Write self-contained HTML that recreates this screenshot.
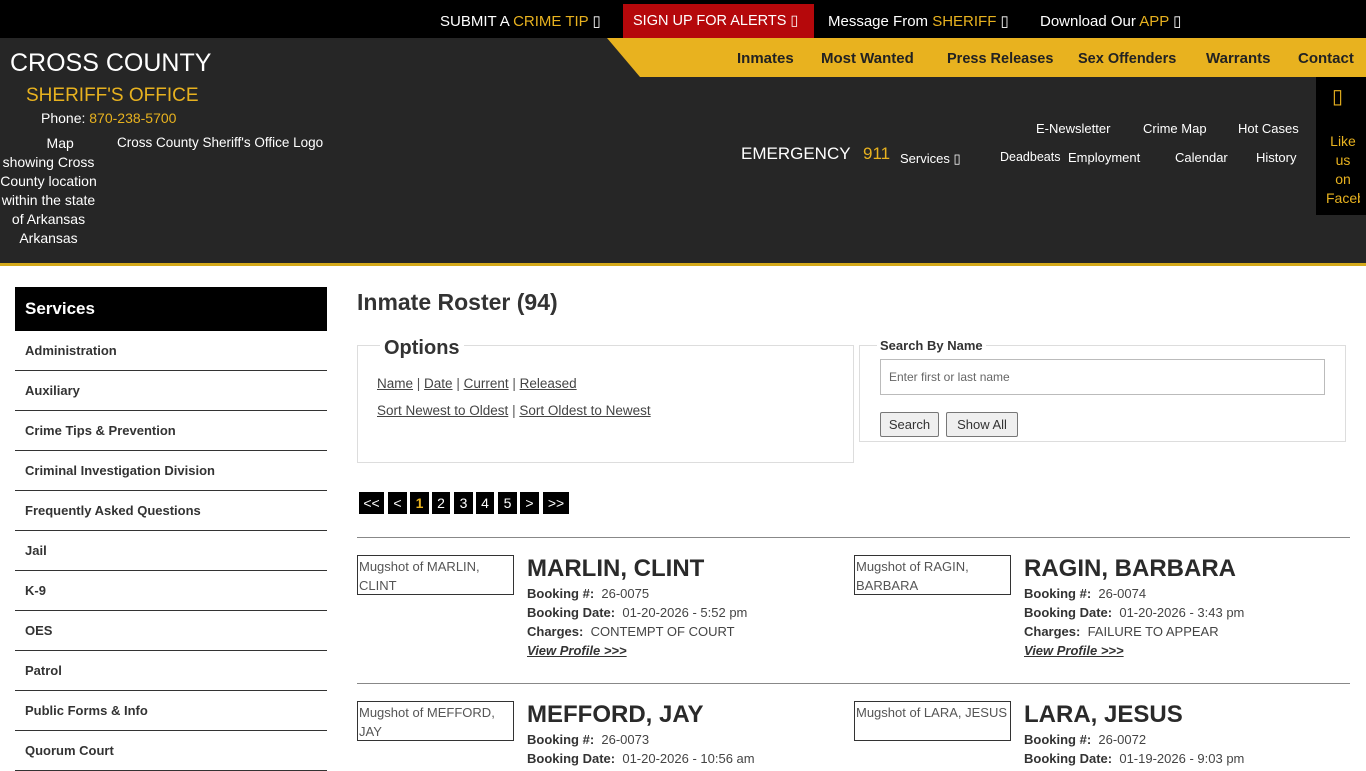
<!DOCTYPE html>
<html><head><meta charset="utf-8"><style>
*{box-sizing:border-box;margin:0;padding:0}
body{width:1366px;height:768px;overflow:hidden;font-family:"Liberation Sans",sans-serif;background:#fff;color:#333;position:relative}
.abs{position:absolute;white-space:nowrap}
.top{position:absolute;left:0;top:0;width:1366px;height:38px;background:#000}
.top .t{position:absolute;top:12px;font-size:15px;color:#fff}
.g,.top .g{color:#e8b21f}
.hdr{position:absolute;left:0;top:38px;width:1366px;height:228px;background:#262626;border-bottom:3px solid #d4a91a}
.nav{position:absolute;left:607px;top:38px;width:759px;height:39px;background:#e8b21f;clip-path:polygon(0 0,100% 0,100% 100%,33px 100%)}
.nav span{position:absolute;top:12px;font-size:15px;font-weight:bold;color:#222}
.w{color:#fff}
.sm{font-size:14px;color:#fff}
.side{position:absolute;left:15px;top:287px;width:312px}
.side .h{background:#000;color:#fff;font-weight:bold;font-size:17px;height:44px;line-height:44px;padding-left:10px}
.side .i{height:40px;line-height:40px;border-bottom:1px solid #333;padding-left:10px;font-size:13px;font-weight:bold;color:#333}
a{color:#444;text-decoration:underline}
.pg{position:absolute;top:492px;height:22px;background:#000;color:#fff;font-size:14px;text-align:center;line-height:22px}
.name{font-size:24px;font-weight:bold;color:#2a2a2a}
.f{font-size:13px;color:#444;line-height:19px}
.f b{color:#333}
.mug{position:absolute;width:157px;height:40px;border:1px solid #333;font-size:13px;color:#555;padding:1px;line-height:19px;white-space:normal}
</style></head><body>
<div class="top">
<span class="t" style="left:440px">SUBMIT A <span class="g">CRIME TIP</span> ▯</span>
<div style="position:absolute;left:623px;top:4px;width:191px;height:34px;background:#b5080b"></div>
<span class="t" style="left:633px;top:13px;font-size:14.5px">SIGN UP FOR ALERTS ▯</span>
<span class="t" style="left:828px">Message From <span class="g">SHERIFF</span> ▯</span>
<span class="t" style="left:1040px">Download Our <span class="g">APP</span> ▯</span>
</div>
<div class="hdr"></div>
<div class="nav">
<span style="left:130px">Inmates</span><span style="left:214px">Most Wanted</span><span style="left:340px;top:13px;font-size:14.5px">Press Releases</span><span style="left:471px;top:13px;font-size:14.5px">Sex Offenders</span><span style="left:599px">Warrants</span><span style="left:691px">Contact</span>
</div>
<div class="abs w" style="left:10px;top:49px;font-size:25px">CROSS COUNTY</div>
<div class="abs g" style="left:26px;top:85px;font-size:19px">SHERIFF'S OFFICE</div>
<div class="abs w" style="left:41px;top:110px;font-size:14px">Phone: <span class="g">870-238-5700</span></div>
<div class="abs sm" style="left:0;top:134px;width:97px;text-align:center;white-space:normal;line-height:19px">&nbsp;&nbsp;&nbsp;&nbsp;&nbsp;&nbsp;Map showing Cross County location within the state of Arkansas Arkansas</div>
<div class="abs sm" style="left:117px;top:135px;font-size:13.5px">Cross County Sheriff's Office Logo</div>
<div class="abs w" style="left:741px;top:144px;font-size:17px">EMERGENCY <span class="g" style="margin-left:8px">911</span></div>
<div class="abs sm" style="left:1036px;top:121px;font-size:13px">E-Newsletter</div>
<div class="abs sm" style="left:1143px;top:121px;font-size:13px">Crime Map</div>
<div class="abs sm" style="left:1238px;top:121px;font-size:13px">Hot Cases</div>
<div class="abs sm" style="left:900px;top:151px;font-size:13px">Services ▯</div>
<div class="abs sm" style="left:1000px;top:150px;font-size:12.5px">Deadbeats</div>
<div class="abs sm" style="left:1068px;top:150px;font-size:13px">Employment</div>
<div class="abs sm" style="left:1175px;top:150px;font-size:13px">Calendar</div>
<div class="abs sm" style="left:1256px;top:150px;font-size:13px">History</div>
<div style="position:absolute;left:1316px;top:77px;width:50px;height:138px;background:#000"></div>
<div class="abs g" style="left:1332px;top:84px;font-size:20px">▯</div>
<div class="abs g" style="left:1326px;top:132px;width:34px;font-size:14px;text-align:center;white-space:normal;line-height:19px;overflow:hidden;height:76px">Like us on Facebook</div>

<div class="side"><div class="h">Services</div>
<div class="i">Administration</div><div class="i">Auxiliary</div><div class="i">Crime Tips &amp; Prevention</div><div class="i">Criminal Investigation Division</div><div class="i">Frequently Asked Questions</div><div class="i">Jail</div><div class="i">K-9</div><div class="i">OES</div><div class="i">Patrol</div><div class="i">Public Forms &amp; Info</div><div class="i">Quorum Court</div></div>

<div class="abs" style="left:357px;top:289px;font-size:23px;font-weight:bold;color:#333">Inmate Roster (94)</div>
<div style="position:absolute;left:357px;top:345px;width:497px;height:118px;border:1px solid #ddd"></div>
<div class="abs" style="left:380px;top:337px;font-size:20px;font-weight:bold;background:#fff;padding:0 4px;color:#333">Options</div>
<div class="abs" style="left:377px;top:376px;font-size:13.5px;color:#555"><a>Name</a> | <a>Date</a> | <a>Current</a> | <a>Released</a></div>
<div class="abs" style="left:377px;top:403px;font-size:13.5px;color:#555"><a>Sort Newest to Oldest</a> | <a>Sort Oldest to Newest</a></div>
<div style="position:absolute;left:859px;top:345px;width:487px;height:97px;border:1px solid #ddd"></div>
<div class="abs" style="left:877px;top:338px;font-size:13px;font-weight:bold;background:#fff;padding:0 3px;color:#333">Search By Name</div>
<div style="position:absolute;left:880px;top:359px;width:445px;height:36px;border:1px solid #bbb;font-size:12px;color:#666;padding:10px 8px">Enter first or last name</div>
<div style="position:absolute;left:880px;top:412px;width:59px;height:25px;border:1px solid #777;background:#efefef;font-size:13px;text-align:center;line-height:23px;border-radius:2px">Search</div>
<div style="position:absolute;left:946px;top:412px;width:72px;height:25px;border:1px solid #777;background:#efefef;font-size:13px;text-align:center;line-height:23px;border-radius:2px">Show All</div>

<div class="pg" style="left:359px;width:25px">&lt;&lt;</div>
<div class="pg" style="left:388px;width:19px">&lt;</div>
<div class="pg" style="left:410px;width:19px;color:#e8b21f;font-weight:bold">1</div>
<div class="pg" style="left:432px;width:18px">2</div>
<div class="pg" style="left:454px;width:19px">3</div>
<div class="pg" style="left:476px;width:18px">4</div>
<div class="pg" style="left:498px;width:19px">5</div>
<div class="pg" style="left:520px;width:19px">&gt;</div>
<div class="pg" style="left:543px;width:26px">&gt;&gt;</div>

<div style="position:absolute;left:357px;top:537px;width:993px;border-top:1px solid #888"></div>
<div style="position:absolute;left:357px;top:683px;width:993px;border-top:1px solid #888"></div>

<div class="mug" style="left:357px;top:555px">Mugshot of MARLIN, CLINT</div>
<div class="abs name" style="left:527px;top:555px">MARLIN, CLINT</div>
<div class="abs f" style="left:527px;top:584px"><b>Booking #:</b>&nbsp; 26-0075<br><b>Booking Date:</b>&nbsp; 01-20-2026 - 5:52 pm<br><b>Charges:</b>&nbsp; CONTEMPT OF COURT<br><i><b><u>View Profile &gt;&gt;&gt;</u></b></i></div>

<div class="mug" style="left:854px;top:555px">Mugshot of RAGIN, BARBARA</div>
<div class="abs name" style="left:1024px;top:555px">RAGIN, BARBARA</div>
<div class="abs f" style="left:1024px;top:584px"><b>Booking #:</b>&nbsp; 26-0074<br><b>Booking Date:</b>&nbsp; 01-20-2026 - 3:43 pm<br><b>Charges:</b>&nbsp; FAILURE TO APPEAR<br><i><b><u>View Profile &gt;&gt;&gt;</u></b></i></div>

<div class="mug" style="left:357px;top:701px">Mugshot of MEFFORD, JAY</div>
<div class="abs name" style="left:527px;top:701px">MEFFORD, JAY</div>
<div class="abs f" style="left:527px;top:730px"><b>Booking #:</b>&nbsp; 26-0073<br><b>Booking Date:</b>&nbsp; 01-20-2026 - 10:56 am</div>

<div class="mug" style="left:854px;top:701px">Mugshot of LARA, JESUS</div>
<div class="abs name" style="left:1024px;top:701px">LARA, JESUS</div>
<div class="abs f" style="left:1024px;top:730px"><b>Booking #:</b>&nbsp; 26-0072<br><b>Booking Date:</b>&nbsp; 01-19-2026 - 9:03 pm</div>
</body></html>
